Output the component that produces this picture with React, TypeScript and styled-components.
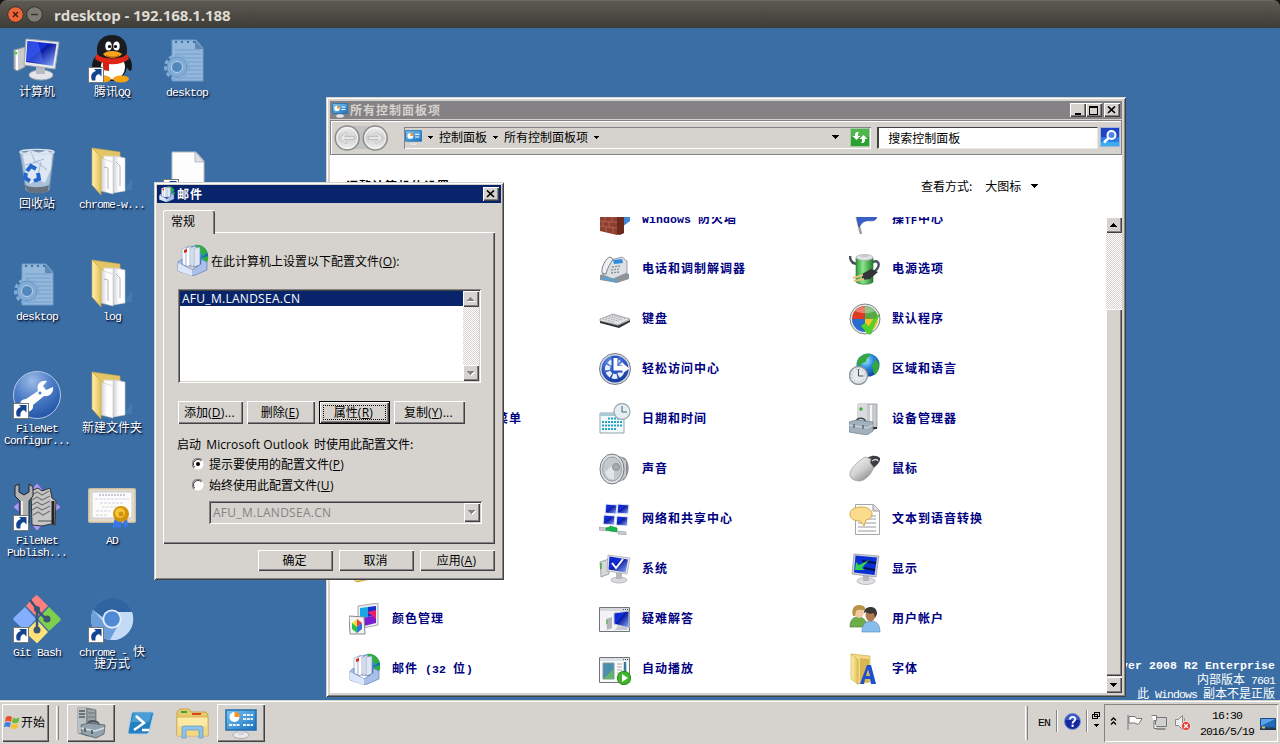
import React from "react";
import styled, { createGlobalStyle, css } from "styled-components";

const face = "#d6d3ce";
const shade = "#848284";
const dark = "#424142";
const navy = "#08246b";
const link = "#000080";

const Global = createGlobalStyle`
  * { box-sizing: border-box; }
  body { margin: 0; overflow: hidden; font-family: "Noto Sans CJK SC", sans-serif; font-size: 12px; line-height: 14px; color: #000; }
  svg { display: block; flex: none; }
`;

/* ---------- text ---------- */
const MonoRun = styled.span<{ $bold?: boolean }>`
  font-family: "Liberation Mono", monospace;
  font-size: 11.5px;
  line-height: 0;
  letter-spacing: ${(p) => (p.$bold ? "0.1px" : "-0.9px")};
`;
const SansRun = styled.span<{ $pad?: number }>`
  font-family: "Open Sans", sans-serif;
  font-size: 12px;
  line-height: 0;
  letter-spacing: ${(p) => (p.$pad ? "0.1px" : "0.28px")};
  margin: 0 ${(p) => p.$pad || 0}px;
`;
const Mixed = ({ text, bold }: { text: string; bold?: boolean }) => (
  <>
    {text.split(/([\x20-\x7e]+)/).map((run, i) =>
      i % 2 ? <MonoRun key={i} $bold={bold}>{run}</MonoRun> : run
    )}
  </>
);

/* ---------- bevels ---------- */
const raised = css`
  background: ${face};
  box-shadow: inset 1px 1px #fff, inset -1px -1px ${dark}, inset -2px -2px ${shade};
`;
const sunken = css`
  box-shadow: inset 1px 1px ${shade}, inset -1px -1px #fff, inset 2px 2px ${dark}, inset -2px -2px ${face};
`;

/* ---------- frame ---------- */
const Screen = styled.div`
  width: 1280px;
  height: 744px;
  display: flex;
  flex-direction: column;
  overflow: hidden;
  background: #3a6ea5;
`;
const HostBar = styled.header`
  flex: none;
  height: 28px;
  display: flex;
  align-items: center;
  padding: 0 0 0 7px;
  gap: 2px;
  background: linear-gradient(#5c5a51, #4d4b44 50%, #3d3c38);
  border-top: 1px solid #6d6b62;
  border-radius: 7px 7px 0 0;
`;
const HostBarBack = styled.div`
  flex: none;
  background: #15150f;
`;
const HostTitle = styled.h1`
  margin: 0 0 0 9px;
  font: bold 15px/24px "Open Sans", sans-serif;
  letter-spacing: -0.08px;
  color: #dfdbd2;
  white-space: pre;
`;
const Desktop = styled.main`
  position: relative;
  flex: 1;
  min-height: 0;
  overflow: hidden;
  padding-top: 7px;
`;
const IconGrid = styled.div`
  display: grid;
  grid-auto-flow: column;
  grid-template-rows: repeat(6, 112px);
  grid-auto-columns: 75px;
`;
const Shortcut = styled.div`
  display: flex;
  flex-direction: column;
  align-items: center;
  width: 75px;
  height: 112px;
  padding-right: 1px;
`;
const ShortcutLabel = styled.div`
  margin-top: 2px;
  width: 74px;
  text-align: center;
  white-space: pre;
  line-height: 12px;
  color: #fff;
  text-shadow: 1px 1px 1px rgba(0, 10, 40, 0.85), 1px 2px 2px rgba(0, 10, 40, 0.5);
`;
const Watermark = styled.div`
  position: absolute;
  right: 5px;
  bottom: 1px;
  display: flex;
  flex-direction: column;
  align-items: flex-end;
  color: #fff;
  white-space: pre;
`;
const MarkLine = styled.div<{ $bold?: boolean; $h: number }>`
  height: ${(p) => p.$h}px;
  line-height: 13px;
  font-weight: ${(p) => (p.$bold ? 700 : 400)};
`;

/* ---------- windows ---------- */
const Win = styled.section<{ $x: number; $y: number; $w: number; $h: number; $b: number }>`
  position: absolute;
  left: ${(p) => p.$x}px;
  top: ${(p) => p.$y}px;
  width: ${(p) => p.$w}px;
  height: ${(p) => p.$h}px;
  padding: ${(p) => p.$b}px;
  display: flex;
  flex-direction: column;
  background: ${face};
  box-shadow: inset 1px 1px ${face}, inset -1px -1px ${dark}, inset 2px 2px #fff, inset -2px -2px ${shade};
`;
const TitleBar = styled.div<{ $active?: boolean }>`
  flex: none;
  height: 18px;
  display: flex;
  align-items: center;
  padding: 0 2px;
  background: ${(p) => (p.$active ? navy : shade)};
  color: ${(p) => (p.$active ? "#fff" : face)};
  font-weight: 700;
`;
const TitleText = styled.span`
  flex: 1;
  margin-left: 2px;
  letter-spacing: 1px;
`;
const CaptionButton = styled.button<{ $gap?: number }>`
  ${raised}
  border: 0;
  padding: 0;
  width: 16px;
  height: 14px;
  margin-left: ${(p) => p.$gap || 0}px;
  display: grid;
  place-items: center;
`;
const ToolBar = styled.div`
  flex: none;
  height: 35px;
  margin-top: 1px;
  display: flex;
  align-items: flex-start;
  padding: 7px 1px 0 3px;
  border: 1px solid ${shade};
  box-shadow: inset 1px 1px #fff;
`;
const Address = styled.div`
  margin: -1px 0 0 14px;
  width: 468px;
  height: 22px;
  display: flex;
  align-items: center;
  padding: 1px 1px 2px 1px;
  box-shadow: inset 1px 1px ${shade}, inset -1px -1px #fff;
`;
const Gap = styled.span<{ $w: number }>`
  width: ${(p) => p.$w}px;
`;
const Crumb = styled.span`
  margin: -2px 6px 0 5px;
  line-height: 14px;
`;
const Spacer = styled.span`
  flex: 1;
`;
const Search = styled.div`
  margin: -1px 2px 0 6px;
  width: 221px;
  height: 22px;
  padding: 3px 0 0 10px;
  background: #fff;
  border: 1px solid #e7e7e7;
  border-top-color: ${dark};
  border-left-color: ${dark};
  box-shadow: inset 1px 0 ${dark};
`;
const PanelBody = styled.div`
  flex: 1;
  min-height: 0;
  display: flex;
  flex-direction: column;
  background: #fff;
`;
const PanelHead = styled.div`
  flex: none;
  height: 62px;
  display: flex;
  padding: 24px 0 0 16px;
`;
const Heading = styled.h2`
  margin: 0;
  width: 575px;
  font-size: 12px;
  line-height: 14px;
  letter-spacing: 1px;
`;
const ViewBy = styled.div`
  display: flex;
  align-items: center;
  height: 14px;
`;
const ViewMode = styled.span`
  margin: 0 10px 0 13px;
`;
const ListArea = styled.div`
  flex: 1;
  min-height: 0;
  display: flex;
`;
const Items = styled.div`
  flex: 1;
  min-width: 0;
  overflow: hidden;
  padding-left: 19px;
  display: grid;
  grid-template-columns: repeat(3, 250px);
  grid-auto-rows: 50px;
`;
const Item = styled.a<{ $col: number; $row: number }>`
  grid-column: ${(p) => p.$col};
  grid-row: ${(p) => p.$row};
  display: flex;
  align-items: center;
  gap: 11px;
  height: 50px;
  margin-top: -23px;
  white-space: pre;
  color: ${link};
  font-weight: 700;
  letter-spacing: 1px;
`;
const ItemName = styled.span`
  padding-bottom: 2px;
`;
const ScrollBar = styled.div`
  flex: none;
  width: 16px;
  display: flex;
  flex-direction: column;
  background: repeating-conic-gradient(#fff 0 25%, ${face} 0 50%) 0 0 / 2px 2px;
`;
const ScrollButton = styled.button`
  ${raised}
  flex: none;
  border: 0;
  padding: 0;
  width: 16px;
  height: 16px;
  display: grid;
  place-items: center;
`;
const Thumb = styled.div`
  ${raised}
  margin-top: 76px;
  height: 367px;
`;

/* ---------- dialog ---------- */
const DialogBody = styled.div`
  flex: 1;
  display: flex;
  flex-direction: column;
  padding: 7px 6px 6px 6px;
`;
const Tab = styled.div`
  position: relative;
  z-index: 1;
  width: 52px;
  height: 24px;
  margin-bottom: -2px;
  padding: 3px 0 0 7px;
  background: ${face};
  border-top: 1px solid #fff;
  border-left: 1px solid #fff;
  border-radius: 3px 2px 0 0;
  box-shadow: inset -1px 0 ${dark}, inset -2px 0 ${shade};
`;
const Page = styled.div`
  height: 312px;
  display: flex;
  flex-direction: column;
  padding: 12px 13px 0 14px;
  box-shadow: inset 1px 1px #fff, inset -1px -1px ${dark}, inset -2px -2px ${shade};
`;
const Intro = styled.div`
  display: flex;
  align-items: center;
  gap: 2px;
  height: 32px;
`;
const IntroText = styled.span`
  padding-top: 2px;
`;
const ListBox = styled.div`
  ${sunken}
  margin: 13px 0 0 1px;
  width: 303px;
  height: 94px;
  padding: 2px;
  display: flex;
  background: #fff;
`;
const ListRows = styled.div`
  flex: 1;
`;
const SelectedRow = styled.div`
  height: 15px;
  padding-left: 2px;
  line-height: 14px;
  background: ${navy};
  color: #fff;
`;
const ButtonRow = styled.div<{ $top: number; $gap: number; $end?: boolean }>`
  display: flex;
  justify-content: ${(p) => (p.$end ? "flex-end" : "flex-start")};
  gap: ${(p) => p.$gap}px;
  margin: ${(p) => p.$top}px 0 0 ${(p) => (p.$end ? 0 : 1)}px;
`;
const PushButton = styled.button<{ $w: number; $h: number; $focus?: boolean }>`
  ${raised}
  position: relative;
  flex: none;
  border: 0;
  padding: 0 2px 2px 0;
  width: ${(p) => p.$w}px;
  height: ${(p) => p.$h}px;
  font: inherit;
  color: #000;
  white-space: nowrap;
  ${(p) =>
    p.$focus &&
    css`
      border: 1px solid #000;
      &::after {
        content: "";
        position: absolute;
        inset: 3px;
        border: 1px dotted #000;
      }
    `}
`;
const Caption = styled.div`
  margin-top: 13px;
  height: 14px;
  line-height: 14px;
  white-space: pre;
`;
const RadioRow = styled.label<{ $top: number }>`
  display: flex;
  align-items: center;
  gap: 5px;
  height: 14px;
  margin: ${(p) => p.$top}px 0 0 15px;
`;
const Combo = styled.div`
  ${sunken}
  margin: 9px 0 0 32px;
  width: 273px;
  height: 23px;
  padding: 2px 2px 2px 4px;
  display: flex;
  align-items: center;
  justify-content: space-between;
  color: ${shade};
`;
const ComboButton = styled.span`
  ${raised}
  width: 16px;
  height: 19px;
  display: grid;
  place-items: center;
`;

/* ---------- taskbar ---------- */
const TaskBar = styled.footer`
  flex: none;
  height: 44px;
  display: flex;
  align-items: flex-start;
  padding: 4px 2px 0 2px;
  background: ${face};
  box-shadow: inset 0 1px ${face}, inset 0 2px #fff;
`;
const StartButton = styled.button`
  ${raised}
  border: 0;
  width: 47px;
  height: 38px;
  padding: 0 0 2px 2px;
  display: flex;
  align-items: center;
  font: inherit;
  color: #000;
`;
const Rule = styled.span<{ $l: number; $r: number; $thick?: boolean }>`
  width: ${(p) => (p.$thick ? 3 : 2)}px;
  height: ${(p) => (p.$thick ? 34 : 22)}px;
  margin: ${(p) => (p.$thick ? 2 : 6)}px ${(p) => p.$r}px 0 ${(p) => p.$l}px;
  border-left: 1px solid ${(p) => (p.$thick ? "#fff" : shade)};
  border-right: 1px solid ${(p) => (p.$thick ? shade : "#fff")};
`;
const TaskButton = styled.button<{ $open?: boolean; $w: number }>`
  border: 0;
  padding: 0 0 1px;
  width: ${(p) => p.$w}px;
  height: 38px;
  display: grid;
  place-items: center;
  background: ${face};
  ${(p) => p.$open && raised}
`;
const Lang = styled.span`
  width: 13px;
  margin: 10px -1px 0 1px;
`;
const TrayGlyph = styled.span<{ $w: number; $top: number; $l?: number }>`
  width: ${(p) => p.$w}px;
  margin: ${(p) => p.$top}px 0 0 ${(p) => p.$l || 0}px;
`;
const Tray = styled.div`
  width: 174px;
  height: 38px;
  display: flex;
  align-items: flex-start;
  margin-left: 3px;
  box-shadow: inset 1px 1px ${shade}, inset -1px -1px #fff;
`;
const Clock = styled.div`
  width: 54px;
  margin: 2px 0 0 9px;
  text-align: center;
  line-height: 16px;
  white-space: nowrap;
`;

/* ---------- small glyphs ---------- */
const Arrow = ({ up, w = 7, color = "#000", shadow }: { up?: boolean; w?: number; color?: string; shadow?: boolean }) => {
  const h = (w + 1) / 2;
  const d = up ? `M0 ${h}H${w}L${w / 2} 0Z` : `M0 0H${w}L${w / 2} ${h}Z`;
  return (
    <svg width={w + 1} height={h + 1} shapeRendering="crispEdges">
      {shadow && <path d={d} fill="#fff" transform="translate(1 1)" />}
      <path d={d} fill={color} />
    </svg>
  );
};
const CloseGlyph = () => (
  <svg width="10" height="8" viewBox="0 0 10 8">
    <path d="M1 .5l7 6.5M8 .5L1 7" stroke="#000" strokeWidth="1.7" />
  </svg>
);
const MinGlyph = () => (
  <svg width="10" height="9"><path d="M2 7h6v2H2z" fill="#000" /></svg>
);
const MaxGlyph = () => (
  <svg width="10" height="9" shapeRendering="crispEdges">
    <path d="M0 0h9v9H0zM1 2v6h7V2z" fill="#000" fillRule="evenodd" />
  </svg>
);
const Radio = ({ on }: { on?: boolean }) => (
  <svg width="12" height="12" viewBox="0 0 12 12">
    <circle cx="6" cy="6" r="5.5" fill="#fff" />
    <path d="M2 10A5.5 5.5 0 0 1 10 2" fill="none" stroke={shade} strokeWidth="1.1" />
    <path d="M2.8 9.2A4.5 4.5 0 0 1 9.2 2.8" fill="none" stroke={dark} strokeWidth="1" />
    {on && <circle cx="6" cy="6" r="2" />}
  </svg>
);

/* ---------- shared gradients ---------- */
const Defs = () => (
  <svg width="0" height="0" style={{ position: "absolute" }}>
    <defs>
      <linearGradient id="scr" x1="0" y1="0" x2="1" y2="1">
        <stop offset="0" stopColor="#0a1fc4" /><stop offset=".4" stopColor="#1230d8" />
        <stop offset=".45" stopColor="#0a18a0" /><stop offset="1" stopColor="#8fb4ff" />
      </linearGradient>
      <linearGradient id="grey" x1="0" y1="0" x2="1" y2="1">
        <stop offset="0" stopColor="#f4f4f6" /><stop offset="1" stopColor="#8d9095" />
      </linearGradient>
      <linearGradient id="fold" x1="0" y1="0" x2="1" y2="0">
        <stop offset="0" stopColor="#fff3ae" /><stop offset="1" stopColor="#e2bf58" />
      </linearGradient>
      <linearGradient id="paper" x1="0" y1="0" x2="1" y2="0">
        <stop offset="0" stopColor="#cfcfd4" /><stop offset=".5" stopColor="#fff" />
      </linearGradient>
      <radialGradient id="globe" cx=".4" cy=".3" r=".8">
        <stop offset="0" stopColor="#9fe8ff" /><stop offset=".45" stopColor="#2585dc" /><stop offset="1" stopColor="#0b3590" />
      </radialGradient>
      <radialGradient id="blueBall" cx=".4" cy=".25" r=".8">
        <stop offset="0" stopColor="#6d96ea" /><stop offset=".6" stopColor="#2c55c4" /><stop offset="1" stopColor="#163894" />
      </radialGradient>
      <radialGradient id="wrenchBall" cx=".4" cy=".2" r=".85">
        <stop offset="0" stopColor="#9dbbe6" /><stop offset=".5" stopColor="#4a7cc6" /><stop offset="1" stopColor="#1d50a4" />
      </radialGradient>
      <linearGradient id="nav" x1="0" y1="0" x2="0" y2="1">
        <stop offset="0" stopColor="#f0f0f0" /><stop offset=".5" stopColor="#cfcfcf" /><stop offset="1" stopColor="#f2f2f2" />
      </linearGradient>
      <linearGradient id="panelBlue" x1="0" y1="0" x2="1" y2="1">
        <stop offset="0" stopColor="#7cc6f5" /><stop offset="1" stopColor="#1c72bf" />
      </linearGradient>
      <linearGradient id="battery" x1="0" y1="0" x2="1" y2="0">
        <stop offset="0" stopColor="#2f9638" /><stop offset=".4" stopColor="#8ee58c" /><stop offset="1" stopColor="#1f7f2a" />
      </linearGradient>
      <linearGradient id="mouse" x1="0" y1="0" x2=".7" y2="1">
        <stop offset="0" stopColor="#fbfbfb" /><stop offset=".6" stopColor="#cfcfcf" /><stop offset="1" stopColor="#8c8c8c" />
      </linearGradient>
    </defs>
  </svg>
);

const Overlay = () => (
  <g>
    <rect x=".5" y="32.5" width="15" height="15" fill="#fff" stroke="#777" />
    <path d="M4 45.500c-2-5 0-8.500 4-9.500L6 34h7.500v7.500L11 39c-3 .8-4 2.800-3.500 6.500z" fill="#14438f" />
  </g>
);
const I48 = ({ children }: { children: React.ReactNode }) => (
  <svg width="48" height="48" viewBox="0 0 48 48">{children}</svg>
);
const I32 = ({ children, s = 32 }: { children: React.ReactNode; s?: number }) => (
  <svg width={s} height={s} viewBox="0 0 32 32">{children}</svg>
);

/* ---------- desktop icons ---------- */
const Computer = () => (
  <I48>
    <path d="M1 15l11-3v20L4 36l-3-2z" fill="#c9cbd0" stroke="#8d9096" />
    <path d="M4 15v20" stroke="#fff" strokeWidth="2" /><circle cx="3" cy="18" r="1.500" fill="#3fdc2c" />
    <ellipse cx="28" cy="40" rx="12" ry="5" fill="#e4e5ea" stroke="#a9abb2" />
    <path d="M23 30h9v9h-9z" fill="#b9bbc2" />
    <path d="M13 4l33 3-4 27-31-4z" fill="#e8e9ee" stroke="#a5a8b0" />
    <path d="M14.500 6l29 3-3.500 22-27-4z" fill="url(#scr)" />
    <path d="M15 6l10 1 6 21.500-18-2.500z" fill="#4a6cf5" opacity=".55" />
  </I48>
);
const Penguin = () => (
  <I48>
    <path d="M9 20c-5 4-6 12-4 16 2 0 4-3 5-6zM39 20c5 4 6 12 4 16-2 0-4-3-5-6z" fill="#15171a" />
    <ellipse cx="24" cy="30" rx="15" ry="16" fill="#15171a" />
    <ellipse cx="25" cy="32" rx="12" ry="12.500" fill="#fff" />
    <ellipse cx="15" cy="44" rx="8" ry="3.500" fill="#f6a211" /><ellipse cx="33" cy="44" rx="8" ry="3.500" fill="#f6a211" />
    <path d="M9 17C8 6 15 0 24 0s16 6 15 17c0 5-7 9-15 9S9 22 9 17z" fill="#1a1c20" />
    <path d="M8 19c8 6 24 6 32 0l1 5c-9 7-24 7-34 0z" fill="#e02618" />
    <path d="M15 26l6 1v9l-6-1z" fill="#d81e14" />
    <ellipse cx="20.500" cy="11" rx="3.200" ry="4.500" fill="#fff" /><ellipse cx="28.500" cy="11" rx="3.200" ry="4.500" fill="#fff" />
    <circle cx="21.500" cy="11.500" r="1.600" /><circle cx="27.500" cy="11.500" r="1.600" />
    <path d="M15 19c4-4 14-4 19 0-4 5-15 5-19 0z" fill="#f9a51a" />
    <path d="M18 20.500c4 2 9 2 13 0" stroke="#c4600b" fill="none" />
    <Overlay />
  </I48>
);
const ConfigFile = () => (
  <I48>
    <path d="M9 5h24l7 8v33H9z" fill="#93b8dc" stroke="#6f9bc6" />
    <path d="M32 5v9h8z" fill="#5d87b4" />
    <path d="M12 15h26M12 19h26M12 23h26M12 27h26M12 31h26M12 35h26M12 39h26M12 43h26" stroke="#749fca" />
    <path d="M12 7h2M18 7h2M24 7h2M30 7h2" stroke="#3d6f9f" strokeWidth="2" />
    <circle cx="14" cy="32" r="10" fill="#82acd6" stroke="#6391c0" />
    <circle cx="14" cy="32" r="11.500" fill="none" stroke="#82acd6" strokeWidth="3" strokeDasharray="4 2.500" />
    <circle cx="14" cy="32" r="5.500" fill="#5288bc" stroke="#b9d2ec" />
  </I48>
);
const RecycleBin = () => (
  <I48>
    <path d="M7 5l34-1-5 39c-1 3-21 4-23 0z" fill="#a9c1da" stroke="#8297ad" />
    <path d="M10 8l7-5 9 3 8-3 5 5-1 14-6 14-8-4-7 5-4-12z" fill="#dde8f4" />
    <path d="M17 3l5 12 9-3M12 18l12-3 10 8M28 15l-4 17" stroke="#9fb7d0" fill="none" />
    <path d="M12 38c6 3 17 3 24 0l-1 6c-5 3-17 3-21 0z" fill="#66727e" />
    <ellipse cx="24" cy="5" rx="17" ry="2.500" fill="none" stroke="#d6e0ea" strokeWidth="1.500" />
    <g fill="none" stroke="#2467cc" strokeWidth="4"><path d="M14 24l4-5 5 3" /><path d="M25 26l1 6-5 2" /><path d="M17 34l-5-3 1-5" /></g>
  </I48>
);
const Folder = ({ lined }: { lined?: boolean }) => (
  <I48>
    <path d="M36 43l8-12v12z" fill="#4f83bd" opacity=".5" />
    <path d="M4 1l28 4v34l-18 4z" fill="#e4c566" stroke="#c9a94c" strokeWidth=".6" />
    <path d="M16 9l17 1v33l-17-1z" fill="#fff" stroke="#ddd" />
    <path d="M25 9l12 2v33l-12 2z" fill="url(#paper)" stroke="#cfcfcf" strokeWidth=".6" />
    <path d="M13 11l12 4v32l-12-3z" fill="url(#paper)" stroke="#c5c5c5" strokeWidth=".6" />
    {lined && <path d="M16 20l4 1v21M28 15l4 4v20" stroke="#aeb4c4" fill="none" />}
    <path d="M4 1l9 9v38L4 38z" fill="url(#fold)" stroke="#cba947" strokeWidth=".6" />
  </I48>
);
const BlankFile = () => (
  <I48>
    <path d="M9 5h24l8 9v33H9z" fill="#fdfdfd" stroke="#b9bcc2" />
    <path d="M32 5v10h9z" fill="#dfe2e8" stroke="#9ea3ac" strokeWidth=".7" /><Overlay />
  </I48>
);
const Wrench = () => (
  <I48>
    <circle cx="24" cy="24" r="23.500" fill="url(#wrenchBall)" stroke="#b5c6e6" />
    <path d="M8 36c-2-4 0-8 5-8l12-8c-2-6 2-11 9-10l-4 5 3 4 7-3c1 6-4 10-9 9L20 34c1 5-4 8-8 6l4-4-2-3z" fill="#fff" />
    <circle cx="27" cy="22" r="1.500" fill="#3f7fd0" /><Overlay />
  </I48>
);
const Publisher = () => (
  <I48>
    <path d="M24 0l6 7H18zM24 48l6-7H18zM0 24l6-5v10zM48 24l-6-5v10z" fill="#a79df2" stroke="#5e52b8" strokeWidth=".7" />
    <path d="M18 8l7-3 4 3 8-3 2 10 4 3-1 24-4-1-9 2-10-1z" fill="#c6c6c6" stroke="#333" />
    <path d="M19 12l5-3 5 3 7-4M19 17l5-3 5 3 8-4M19 22l5-3 5 3 8-4M19 27l5-3 5 3 8-4M20 32l5-3 5 3 7-4M25 38h14" stroke="#777" strokeWidth="1.300" fill="none" />
    <path d="M40 18v23" stroke="#222" strokeWidth="3" />
    <path d="M2 3l4-2v8l5 3 5-3V1l4 3v9l-4 5v22h-9V18l-5-5z" fill="#b4b4b4" stroke="#222" />
    <path d="M9 18v22" stroke="#eee" strokeWidth="2" /><Overlay />
  </I48>
);
const Certificate = () => (
  <I48>
    <rect x="0" y="5" width="48" height="35" rx="2" fill="#c9bda4" />
    <rect x="1.500" y="6.500" width="45" height="32" fill="#e6dcc6" /><rect x="4" y="9" width="40" height="26" fill="#fdfcfb" stroke="#c6cbe0" />
    <path d="M11 12h26" stroke="#9193b4" strokeDasharray="2 1" /><path d="M7 16h34M12 20h24M14 24h18M8 28h14M8 32h12" stroke="#cfd2e4" strokeDasharray="3 1" />
    <path d="M27 35l-3 11 5-2 4 1 1-8zM35 37l1 8 4-2-1-8z" fill="#3a77e6" />
    <circle cx="33" cy="31" r="8" fill="#d39208" /><circle cx="32" cy="30" r="5" fill="#f5c73c" /><circle cx="33" cy="31" r="2.500" fill="#d39208" />
  </I48>
);
const GitLogo = () => (
  <I48>
    <path d="M24 0L35 11 24 22 13 11Q21 1 24 0z" fill="#ff7f7f" />
    <path d="M36 12l11 11q1.500 1.500 0 3L36 36 25 24z" fill="#7fcf4f" />
    <path d="M12 12l11 12-11 12L1 25.500q-1.500-1.500 0-3z" fill="#86aeff" />
    <path d="M24 25l11 12-10 10.500q-1 1-2 0L12 37z" fill="#ffe17a" />
    <path d="M17 5l7 9v24M24 15l10 10" stroke="#3a5573" strokeWidth="2.500" fill="none" />
    <circle cx="24" cy="14" r="3" fill="#3a5573" /><circle cx="34" cy="24" r="3.500" fill="#3a5573" /><circle cx="24" cy="35" r="3.500" fill="#3a5573" />
    <Overlay />
  </I48>
);
const Chromium = () => (
  <I48>
    <circle cx="24" cy="24" r="21" fill="#a8c9ef" />
    <path d="M5 15A21 21 0 0 1 44 17H24a8 8 0 0 0-8 6z" fill="#2f64a3" />
    <path d="M5 15a21 21 0 0 0 17 30l8-14a9 9 0 0 1-14-3z" fill="#6d9fdb" />
    <path d="M44 17a21 21 0 0 1-22 28l9-16c3-4 1-9-1-12z" fill="#c3dbf6" />
    <circle cx="24" cy="24" r="9.500" fill="#e7f1fc" /><circle cx="24" cy="24" r="7.800" fill="#4f8ad6" />
    <Overlay />
  </I48>
);

/* ---------- control panel icons ---------- */
const Mail = ({ s = 32 }: { s?: number }) => (
  <I32 s={s}>
    <circle cx="20" cy="12" r="11" fill="url(#globe)" /><path d="M18 1c6-1 11 3 13 9-3-2-4 3-5 2s-1-4-4-4zM25 14l6-2c1 5-2 10-6 11z" fill="#2fae3c" />
    <path d="M5 5l7-3v19l-7 1z" fill="#f7f8fb" stroke="#8fa0c4" strokeWidth=".6" />
    <path d="M9 4l6-2v19l-6 2zM13 4l6-2v19l-6 2z" fill="#fff" stroke="#7f92bd" strokeWidth=".7" />
    <path d="M17 4l6-1v18l-6 2z" fill="#dfe7f5" stroke="#7f92bd" strokeWidth=".7" />
    <path d="M7 6l3-1v3l-3 1z" fill="#d8291c" />
    <path d="M1 18l4-3v5l10 6 9-6v-5l6 3v8l-14 6L1 27z" fill="#a9bfe8" stroke="#5f7fc0" strokeWidth=".7" />
    <path d="M1 19l14 7v6L1 27z" fill="#dbe6f9" />
  </I32>
);
const Firewall = () => (
  <I32>
    <path d="M20 4h11v14l-8 6z" fill="#3f87d8" />
    <path d="M1 8l20-3 4 2v23l-7 2L1 28z" fill="#8f3f2f" /><path d="M18 8l7-1v23l-4 2-3-1z" fill="#6c2a1e" />
    <path d="M1 13l17 1M1 18l17 1.500M1 23l17 2M6 13v5M13 14v5M4 18v5M10 18.500v6M7 23.500v5M14 24v6" stroke="#b9705c" strokeWidth=".7" />
  </I32>
);
const Phone = () => (
  <I32>
    <path d="M1 22l18-6 11 5v5l-12 4L1 27z" fill="#8d949b" /><path d="M8 8l15-4 5 4v12l-14 6-10-4z" fill="#dce0e4" stroke="#858c94" strokeWidth=".8" />
    <path d="M14 7l9-1 1 4-9 1z" fill="#2d8be0" /><path d="M3 20C2 14 7 5 11 4l3 2c-2 4-6 9-7 15z" fill="#eef0f3" stroke="#7b828b" />
    <path d="M13 14l8-1M12 17l9-1M12 20l8-1" stroke="#8a929c" strokeWidth="1.300" strokeDasharray="2 1" /><path d="M4 25l13 3" stroke="#4aa8e8" strokeWidth="3" strokeDasharray="2 1" />
  </I32>
);
const Keyboard = () => (
  <I32>
    <path d="M1 16l13-5 17 5-12 6L1 18z" fill="#e2e3e5" stroke="#888" strokeWidth=".7" /><path d="M1 18l18 4.500L31 17v2l-11 6-19-5z" fill="#33353a" />
    <path d="M4 16l12 3.500M7 14.700l13 3.500M10 13.500l13 3.500M13 12.200l13 3.500" stroke="#a0a2a6" strokeWidth="1" strokeDasharray="1.500 1" />
  </I32>
);
const Access = () => (
  <I32>
    <circle cx="16" cy="16" r="15.500" fill="#d5dae4" stroke="#777e8c" /><circle cx="16" cy="16" r="13.500" fill="url(#blueBall)" />
    <circle cx="16" cy="16" r="7.500" fill="none" stroke="#eaf0fb" strokeWidth="5" strokeDasharray="4.800 1.500" strokeDashoffset="3" />
    <circle cx="16" cy="16" r="2.500" fill="#2c55c4" />
    <path d="M16 3v13h11" stroke="#2b54c2" strokeWidth="7" fill="none" /><path d="M14.500 5h4v8h5v-3l7 5.500-7 5v-3h-9z" fill="#fff" />
  </I32>
);
const Calendar = () => (
  <I32>
    <path d="M1 10h24v20H1z" fill="#f2fafc" stroke="#93a3aa" /><path d="M1.500 10h23v3h-23z" fill="#a6cbd6" />
    <path d="M9 15.500h14M3 19h20M3 22.500h20M3 26h14" stroke="#22a4c4" strokeWidth="2" strokeDasharray="2 1" />
    <circle cx="23" cy="8.500" r="8" fill="#e4eef3" stroke="#9eaab2" strokeWidth="1.300" /><path d="M23 3v6h5" stroke="#48657a" fill="none" />
  </I32>
);
const Speaker = () => (
  <I32>
    <path d="M14 1l12 4c5 5 5 16-1 22l-11 4z" fill="#8b8f94" /><path d="M20 3l7 5v15l-6 6" fill="#c4c7cb" />
    <ellipse cx="13" cy="16" rx="12" ry="15" fill="#dde0e3" stroke="#777b80" /><ellipse cx="13" cy="16" rx="9.500" ry="12" fill="#c3c9cf" stroke="#9a9ea3" />
    <path d="M15 11l-9 8c1 5 5 8 9 7z" fill="#eef1f4" opacity=".7" /><circle cx="17" cy="14" r="3.500" fill="#a6abb1" stroke="#8d9299" />
  </I32>
);
const Network = () => (
  <I32>
    {[[7, 1], [19, 1], [5, 12], [18, 13]].map(([x, y]) => (
      <path key={x} d={`M${x} ${y}l11 1-1 9-11-1z`} fill="url(#scr)" stroke="#dfe5f5" />
    ))}
    <path d="M0 24l8 1v3l-8-1zM19 28l8 1v3l-8-1z" fill="#c8ccd2" stroke="#888" strokeWidth=".5" /><path d="M7 25l4-1v-1l7 2v4l-7-1-4-1z" fill="#17b54a" stroke="#0b8732" strokeWidth=".6" />
  </I32>
);
const SystemIcon = () => (
  <I32>
    <path d="M1 9l9-3v15l-8 3z" fill="#d5d7db" stroke="#84878c" strokeWidth=".7" /><path d="M2 10v6" stroke="#36b52c" strokeWidth="1.500" />
    <ellipse cx="20" cy="27" rx="8" ry="3" fill="#d9dade" stroke="#999" strokeWidth=".6" /><path d="M17 20h6v6h-6z" fill="#b6b8bc" />
    <path d="M9 2l22 3-3 16-20-3z" fill="#e4e6ec" stroke="#999" strokeWidth=".6" /><path d="M10.500 3.500l18.500 3-2.500 13-17-3z" fill="url(#scr)" />
    <path d="M13 10l4 5 7-9" stroke="#fff" strokeWidth="2" fill="none" />
  </I32>
);
const Trouble = () => (
  <I32>
    <path d="M.5 4.500h30v24H.5z" fill="#f3f3f5" stroke="#6f7479" /><path d="M1 5h29v3H1z" fill="#d5d9dd" /><path d="M24 6.500h6" stroke="#555" strokeDasharray="1 1" />
    <path d="M7 16l6-2v11l-5 2z" fill="#b2b6bb" /><path d="M8 17v4" stroke="#36b52c" /><path d="M15 10l15-2v17l-15-4z" fill="url(#scr)" stroke="#c8ccd6" /><path d="M19 23l8 1 2 3H16z" fill="#c8cacf" />
  </I32>
);
const AutoPlay = () => (
  <I32>
    <path d="M.5 4.500h30v25H.5z" fill="#fafafa" stroke="#6f7479" /><path d="M1 5h29v3H1z" fill="#dbe2e6" /><path d="M24 6.500h6" stroke="#555" strokeDasharray="1 1" />
    <path d="M4 10h11v16H4z" fill="#4b8fae" stroke="#87999f" /><path d="M4.500 26l10-10v10z" fill="#63b36a" />
    <path d="M18 11h5M18 14h5M18 17h5M18 20h4" stroke="#aaa" /><path d="M26 9v10" stroke="#2d7d9d" strokeWidth="2.500" />
    <circle cx="25" cy="25" r="6.700" fill="#3eb528" stroke="#2a8c1a" /><path d="M23 21l6 4-6 4z" fill="#fff" />
  </I32>
);
const Flag = () => (
  <I32>
    <path d="M5 3l7 28" stroke="#999da5" strokeWidth="2.500" /><path d="M6 4c8-2 12 4 22 0-1 5 1 9-1 12-5 5-10-3-17 8z" fill="#355fcb" stroke="#1e3f9e" strokeWidth=".6" />
    <path d="M12 8c4 0 8 4 13 2" stroke="#a6c0f5" strokeWidth="2" fill="none" />
  </I32>
);
const Power = () => (
  <I32>
    <path d="M1 3c0 5 3 8 8 8M22 10c8-5 9 2 6 6s-5 3-7 5" stroke="#4a4e5c" strokeWidth="2.400" fill="none" />
    <path d="M7 5c2-3 15-3 17 0v24c-2 3-15 3-17 0z" fill="url(#battery)" stroke="#23762c" strokeWidth=".6" /><ellipse cx="15.500" cy="4.500" rx="8.500" ry="3" fill="#dfe2e4" stroke="#999" strokeWidth=".6" /><path d="M12 1h7v3h-7z" fill="#c6cace" />
    <path d="M13 21l9-5 7 3-8 7-8 1z" fill="#33353a" /><path d="M4 25l10-3M5 28l10-2" stroke="#e2c27a" strokeWidth="2.200" />
  </I32>
);
const Defaults = () => (
  <I32>
    <circle cx="16" cy="16" r="15" fill="#e6e9ea" stroke="#7d8488" /><path d="M16 16V3A13 13 0 0 0 3 16z" fill="#de3b22" /><path d="M16 16V3a13 13 0 0 1 13 13z" fill="#58a848" />
    <path d="M16 16H3a13 13 0 0 0 13 13z" fill="#2b6bce" /><path d="M16 16h13a13 13 0 0 1-13 13z" fill="#f5c426" />
    <path d="M6 8C12 2 20 2 26 8c-7 3-13 3-20 0z" fill="#fff" opacity=".35" /><path d="M12 23l4-3 4 4c3-6 6-10 11-13-4 6-7 13-9 20h-3z" fill="#4ed42b" stroke="#4bb52e" strokeWidth=".6" />
  </I32>
);
const Region = () => (
  <I32>
    <circle cx="19" cy="12" r="11.500" fill="url(#globe)" />
    <path d="M9 6c4-5 9-6 13-5-2 3-2 3-4 4l-1 4-4 1-2 5-3-4zM26 5l4 6c0 5-1 8-4 11-3-4-1-6-3-8 0-4 4-4 3-9z" fill="#35a83b" />
    <circle cx="9.500" cy="22.500" r="9" fill="#e6eaee" stroke="#8d959d" strokeWidth="1.400" /><path d="M9.500 16v7h5" stroke="#44525f" fill="none" /><circle cx="9.500" cy="22.500" r="6.500" fill="none" stroke="#7b8791" strokeDasharray=".8 2.600" />
  </I32>
);
const Devices = () => (
  <I32>
    <path d="M9 1h19v24l-4 2H9z" fill="#c7c9cc" stroke="#8b8e92" strokeWidth=".7" /><path d="M9 1h9v24H9z" fill="#d9dbde" /><circle cx="12" cy="6" r="1.700" fill="#43a932" /><path d="M22 2v24" stroke="#f6f6f7" strokeWidth="2" /><path d="M22 24h6v2h-6z" fill="#333" />
    <path d="M7 19c1-5 8-5 10 0" stroke="#3f464e" strokeWidth="1.600" fill="none" /><path d="M0 19l7-2 17 2v9l-6 4-18-3z" fill="#a3b1bc" stroke="#6c7a85" strokeWidth=".7" /><path d="M0 22l18 3 6-3" stroke="#d5dee4" fill="none" /><path d="M5 21v4M14 22v4" stroke="#515d67" strokeWidth="1.300" />
  </I32>
);
const Mouse = () => (
  <I32>
    <path d="M15 9c4-7 12-8 16-4 1 4-4 8-10 13z" fill="#3b3d42" /><path d="M1 20C3 13 11 7 16 4l6 2c-3 6 4 6 2 10-3 7-8 11-13 12-5 0-11-2-10-8z" fill="url(#mouse)" stroke="#9a9a9a" strokeWidth=".7" /><path d="M23 8c3-2 5-2 6 0" stroke="#cfd1d4" strokeWidth="1.500" fill="none" />
  </I32>
);
const Speech = () => (
  <I32>
    <path d="M6.500 1.500h18l6 6v24h-24z" fill="#fdfdfd" stroke="#a5a5a5" /><path d="M24 2v6h6" fill="#ddd" stroke="#999" /><path d="M9 13h18M9 16h18M9 20h18M9 24h18M9 28h18" stroke="#9b9b9b" />
    <path d="M12 4c7 0 11 3 11 7 0 3-2 5-6 6l-2 6-4-5C4 18 1 15 1 11c0-4 4-7 11-7z" fill="#fbdc8c" stroke="#c9993c" strokeWidth=".8" />
  </I32>
);
const Display = () => (
  <I32>
    <ellipse cx="17" cy="28" rx="9" ry="3.500" fill="#dfe0e3" stroke="#999" strokeWidth=".6" /><path d="M14 21h6v7h-6z" fill="#b6b8bc" />
    <path d="M5 1l25 2-3 21L3 21z" fill="#cfd2d9" stroke="#8e9198" strokeWidth=".7" /><path d="M6.500 2.500l21.500 2-2.500 17.500L5 19.500z" fill="#0a30d2" /><path d="M13 8l14 2M15 15l11 2" stroke="#04104a" strokeWidth="2.200" /><path d="M6 17l1-8 3 3 10-5-7 8 3 2z" fill="#2fd253" />
  </I32>
);
const Users = () => (
  <I32>
    <path d="M1 24c0-7 3-10 8-10s8 3 9 8l-5 2z" fill="#6eae4a" stroke="#487c2b" strokeWidth=".6" /><ellipse cx="10" cy="8.500" rx="5" ry="6.500" fill="#f0c8a2" /><path d="M4 13C2 6 5 2 10 2s7 3 6 5c-4 0-7-1-9 1l-1 5z" fill="#b89348" />
    <path d="M13 29c0-7 3-11 9-11s9 4 9 11z" fill="#87bdeb" stroke="#5186b7" strokeWidth=".6" /><ellipse cx="21.500" cy="12" rx="5" ry="6.500" fill="#b37c50" /><path d="M15 10c0-4 3-6 7-6s6 3 6 7l-2 4-1-5c-3 1-6 1-8-1z" fill="#3a3633" />
  </I32>
);
const Fonts = () => (
  <I32>
    <path d="M2 1l19 2v26L8 31z" fill="#f2da84" stroke="#c5a548" strokeWidth=".6" /><path d="M11 5l9 1v23l-9 1z" fill="#d9b654" /><path d="M2 1l7 6v24l-7-5z" fill="url(#fold)" stroke="#c5a548" strokeWidth=".6" />
    <path d="M11 31l7-19h4l5 19h-5l-1-5h-5l-1 5zm6-8h4l-2-7z" fill="#1c50d2" />
  </I32>
);
const ColorMgmt = () => (
  <I32>
    <path d="M9 3l20-3v22l-20 4z" fill="#eceef0" stroke="#85898f" strokeWidth=".7" /><path d="M11 5l8-1v10l-8 1z" fill="#18a7e6" /><path d="M19 4l8-1v9l-8 2z" fill="#1430d2" /><path d="M11 15l8-1 8-2v8l-16 4z" fill="#7c1cd0" /><path d="M18 9l9-2v9z" fill="#e6206b" />
    <path d="M0 13l15 1 1 17H1z" fill="#f3f3f3" stroke="#85898f" /><path d="M8 16l5 4v6l-5 4-5-4v-6z" fill="#e9e63a" /><path d="M8 16l5 4-5 4z" fill="#ea3a54" /><path d="M3 20l5 4v6l-5-4z" fill="#2ac24b" /><path d="M13 20v6l-5 4v-6z" fill="#2b74ea" />
  </I32>
);
const FolderOptions = () => (
  <I32><path d="M4 5l12-2 8 4v19l-8 1-8 2-4-3z" fill="#f0d264" stroke="#c5a548" /></I32>
);
const PanelIcon = ({ s = 16 }: { s?: number }) => (
  <I32 s={s}>
    <ellipse cx="16" cy="28" rx="8" ry="3.500" fill="#e9eaec" stroke="#9a9da2" strokeWidth=".8" /><path d="M13 23h6v5h-6z" fill="#d2d4d8" />
    <path d="M1 3h30v20H1z" fill="url(#panelBlue)" stroke="#1f6fae" strokeWidth="1.500" />
    {s > 20 ? (
      <g>
        <circle cx="9.500" cy="10" r="5" fill="#fff" /><path d="M9.500 10V4.500A5.500 5.500 0 0 1 15 10z" fill="#f2972b" />
        <path d="M18 8h10M18 12h10M4 18h11M18 18h10" stroke="#e4f3fd" strokeWidth="1.800" strokeDasharray="3 .8" />
      </g>
    ) : (
      <g><circle cx="10" cy="13" r="5.500" fill="#fff" /><path d="M10 13V7a6 6 0 0 1 5.500 6z" fill="#f2972b" /><path d="M19 10h8M19 15h8" stroke="#fff" strokeWidth="2.200" /></g>
    )}
  </I32>
);

/* ---------- other drawings ---------- */
const NavButtons = () => (
  <svg width="56" height="28" viewBox="0 0 56 28" style={{ marginTop: -4 }}>
    <rect x="10" y="2" width="34" height="23" fill="#c2c2c2" />
    {[13.2, 41.2].map((cx) => (
      <g key={cx}><circle cx={cx} cy="14" r="12" fill="url(#nav)" stroke="#8c8c8c" strokeWidth="1.500" /><circle cx={cx} cy="14" r="10.300" fill="none" stroke="#fafafa" opacity=".8" /></g>
    ))}
    <path d="M5.500 14l6.500-6 1.500 1.500-3 3H20v3h-9.500l3 3L12 20zM49 14l-6.500-6L41 9.500l3 3h-9.500v3H44l-3 3 1.500 1.500z" fill="#e6e6e6" stroke="#b9b9b9" strokeWidth=".8" />
  </svg>
);
const Refresh = () => (
  <svg width="20" height="19" viewBox="0 0 20 19">
    <rect x=".5" y=".5" width="19" height="18" fill="#2ba12f" stroke="#a9c9a8" /><path d="M1 1h18v8H1z" fill="#66c45f" opacity=".6" />
    <path d="M9 4C5 3.500 5 6 5 8H2.500l4 4 4-4H8c0-2 0-3 1-4zM11 15c4 .5 4-2 4-4h2.500l-4-4-4 4H12c0 2 0 3-1 4z" fill="#fff" />
  </svg>
);
const SearchButton = () => (
  <svg width="20" height="21" viewBox="0 0 20 21" style={{ marginTop: -1 }}>
    <rect x=".5" y=".5" width="19" height="19" fill="#2b7be2" stroke="#9fb6d8" /><path d="M1 1h18v9H1z" fill="#1f45c4" /><path d="M1 15h18v4H1z" fill="#45c0f5" opacity=".7" />
    <circle cx="11.500" cy="8" r="4" fill="#4d86ea" stroke="#fff" strokeWidth="2" /><path d="M8.500 11L4 15.500" stroke="#fff" strokeWidth="2.600" />
  </svg>
);
const WinLogo = () => (
  <svg width="17" height="16" viewBox="0 0 17 16">
    <path d="M2 3c2-1.500 4-1.500 6 0L7 8C5 6.500 3 6.500 1 8z" fill="#e8502a" /><path d="M9 3.500c2 1.200 4 1.200 6.500 0L14.500 8c-2 1.500-4.500 1.500-6.500.500z" fill="#6cb83a" />
    <path d="M.8 9c2-1.500 4-1.500 6 0l-1 4.500c-2-1.500-4-1.500-6 0z" fill="#3f7fdc" /><path d="M7.800 9.500c2 1.200 4.300 1.200 6.500 0l-1 4.500c-2 1.500-4.300 1.300-6.500 0z" fill="#f6c22c" />
  </svg>
);
const ServerManager = () => (
  <svg width="32" height="32" viewBox="0 0 32 32">
    <path d="M3 1h9l9 2v25l-8 1-10-3z" fill="#858d92" stroke="#5d6468" strokeWidth=".6" /><path d="M3 1h8v25H3z" fill="#b9c1c4" /><path d="M4 4h6M4 7h6M4 10h6" stroke="#50595e" strokeWidth="1.500" /><path d="M13 4h7M13 8h7M13 12h7" stroke="#b4bbbf" />
    <path d="M13 17c2-4 10-4 11 1" stroke="#49525a" strokeWidth="2" fill="none" /><path d="M6 18l8-2 16 2-1 9-8 4-14-4z" fill="#93a3ad" stroke="#53616b" strokeWidth=".8" /><path d="M6 21l14 3 9-3" stroke="#d6dfe5" strokeWidth="1.500" fill="none" /><path d="M10 21v4M17 23v4" stroke="#444f57" strokeWidth="1.500" />
  </svg>
);
const PowerShell = () => (
  <svg width="28" height="24" viewBox="0 0 28 24">
    <path d="M6.500 1H25q2 0 1.500 2L22 21q-.5 2-2.500 2H2.500Q.5 23 1 21L4.500 3Q5 1 6.500 1z" fill="#2680bd" stroke="#a9d2ee" /><path d="M7 2h18l-3 9H4z" fill="#62b2e4" opacity=".6" />
    <path d="M9 5l8 7-10 7M15 19h7" stroke="#fff" strokeWidth="2.500" fill="none" />
  </svg>
);
const Explorer = () => (
  <svg width="33" height="32" viewBox="0 0 33 32">
    <path d="M1 5l3-3h9l2 3h15l2 3v20H1z" fill="#e9ca68" stroke="#b9953a" strokeWidth=".7" /><path d="M5 4h6v2H5z" fill="#3ca446" /><path d="M16 6h9v2h-9z" fill="#d8432f" />
    <path d="M1 10h31v19H1z" fill="#fbe9a4" stroke="#caa84c" strokeWidth=".7" /><path d="M2 19h29v9H2z" fill="#f3d984" />
    <path d="M6 31V21q0-2 2-2h17q2 0 2 2v10h-4v-8H10v8z" fill="#8fc4ea" stroke="#5c93c2" strokeWidth=".7" />
  </svg>
);
const Help = () => (
  <svg width="17" height="17" viewBox="0 0 17 17">
    <circle cx="8.500" cy="8.500" r="8" fill="#1428a0" stroke="#7f95cf" /><path d="M2 7a6.500 6 0 0 1 13 0z" fill="#5b7fe0" opacity=".6" />
    <path d="M6 6.500C6 3 11.500 3 11.200 6.500 11 8.500 8.600 8.300 8.600 10.500" fill="none" stroke="#fff" strokeWidth="1.900" /><circle cx="8.600" cy="12.800" r="1.200" fill="#fff" />
  </svg>
);
const LangRestore = () => (
  <svg width="9" height="17" viewBox="0 0 9 17" shapeRendering="crispEdges">
    <path d="M2.500 .5h5v4h-5zM.5 2.500h5v4h-5z" fill={face} stroke="#000" /><path d="M2 12h5L4.500 15z" />
  </svg>
);
const Chevrons = () => (
  <svg width="7" height="9" viewBox="0 0 7 9"><path d="M1 3.500L3.500 1 6 3.500M1 7.500L3.500 5 6 7.500" fill="none" stroke="#000" strokeWidth="1.300" /></svg>
);
const TrayFlag = () => (
  <svg width="17" height="17" viewBox="0 0 17 17"><path d="M2 1v15M3 2.500h6l1.500 2H16l-2 3.500-2 2.500-3.500-1.500H3z" fill="#fff" stroke="#777" /></svg>
);
const TrayNet = () => (
  <svg width="17" height="17" viewBox="0 0 17 17"><path d="M5.500 3.500h11v9h-11z" fill="#d0d0d0" stroke="#777" /><path d="M6.500 15h9" stroke="#777" strokeWidth="1.500" /><path d="M1.500 1.500h5v5H4v8h3" fill="#fff" stroke="#777" /></svg>
);
const TraySound = () => (
  <svg width="17" height="17" viewBox="0 0 17 17"><path d="M1.500 5.500h3l4-4v14l-4-4h-3z" fill="#eee" stroke="#888" /><path d="M10.500 4v4" stroke="#999" /><circle cx="12" cy="12" r="4.500" fill="#e23b2e" stroke="#fff" strokeWidth=".7" /><path d="M10 10l4 4M14 10l-4 4" stroke="#fff" strokeWidth="1.300" /></svg>
);
const ShowDesktop = () => (
  <svg width="16" height="15" viewBox="0 0 16 15"><path d="M.5 1.500h15v9H.5z" fill="#2468b8" stroke="#1b4a86" /><path d="M1 2h14L1 9z" fill="#58a4e6" /><path d="M0 11h16v2H0z" fill="#24384f" /><path d="M2 9.500h3v2H2z" fill="#e9b93a" /></svg>
);
const HostButton = ({ close }: { close?: boolean }) => (
  <svg width="17" height="17" viewBox="0 0 17 17">
    <circle cx="8.500" cy="8.500" r="7.800" fill={close ? "#ee6638" : "#7c7a72"} stroke="#32312d" />
    {close ? <path d="M6 6l5 5M11 6l-5 5" stroke="#3a1d12" strokeWidth="1.400" /> : <path d="M5 8.500h7" stroke="#33322e" strokeWidth="1.400" />}
  </svg>
);

/* ---------- data ---------- */
const shortcuts: [React.ReactNode, string][] = [
  [<Computer />, "计算机"], [<RecycleBin />, "回收站"], [<ConfigFile />, "desktop"], [<Wrench />, "FileNet\nConfigur..."], [<Publisher />, "FileNet\nPublish..."], [<GitLogo />, "Git Bash"],
  [<Penguin />, "腾讯QQ"], [<Folder lined />, "chrome-w..."], [<Folder lined />, "log"], [<Folder />, "新建文件夹"], [<Certificate />, "AD"], [<Chromium />, "chrome - 快\n捷方式"],
  [<ConfigFile />, "desktop"], [<BlankFile />, ""],
];
const panelItems: [number, number, React.ReactNode, string][] = [
  [1, 5, <PanelIcon s={32} />, "任务栏和「开始」菜单"], [1, 8, <FolderOptions />, "文件夹选项"], [1, 9, <ColorMgmt />, "颜色管理"], [1, 10, <Mail />, "邮件 (32 位)"],
  [2, 1, <Firewall />, "Windows 防火墙"], [2, 2, <Phone />, "电话和调制解调器"], [2, 3, <Keyboard />, "键盘"], [2, 4, <Access />, "轻松访问中心"], [2, 5, <Calendar />, "日期和时间"],
  [2, 6, <Speaker />, "声音"], [2, 7, <Network />, "网络和共享中心"], [2, 8, <SystemIcon />, "系统"], [2, 9, <Trouble />, "疑难解答"], [2, 10, <AutoPlay />, "自动播放"],
  [3, 1, <Flag />, "操作中心"], [3, 2, <Power />, "电源选项"], [3, 3, <Defaults />, "默认程序"], [3, 4, <Region />, "区域和语言"], [3, 5, <Devices />, "设备管理器"],
  [3, 6, <Mouse />, "鼠标"], [3, 7, <Speech />, "文本到语音转换"], [3, 8, <Display />, "显示"], [3, 9, <Users />, "用户帐户"], [3, 10, <Fonts />, "字体"],
];
const Key = ({ k, tail = "" }: { k: string; tail?: string }) => (
  <SansRun>(<u>{k}</u>){tail}</SansRun>
);

const ControlPanel = () => (
  <Win $x={326} $y={69} $w={800} $h={600} $b={4}>
    <TitleBar>
      <PanelIcon />
      <TitleText>所有控制面板项</TitleText>
      <CaptionButton><MinGlyph /></CaptionButton>
      <CaptionButton><MaxGlyph /></CaptionButton>
      <CaptionButton $gap={2}><CloseGlyph /></CaptionButton>
    </TitleBar>
    <ToolBar>
      <NavButtons />
      <Address>
        <PanelIcon s={17} />
        <Gap $w={6} /><Arrow w={5} />
        <Crumb>控制面板</Crumb><Arrow w={5} />
        <Crumb>所有控制面板项</Crumb><Arrow w={5} />
        <Spacer />
        <Arrow />
        <Gap $w={10} />
        <Refresh />
      </Address>
      <Search>搜索控制面板</Search>
      <SearchButton />
    </ToolBar>
    <PanelBody>
      <PanelHead>
        <Heading>调整计算机的设置</Heading>
        <ViewBy>查看方式: <ViewMode>大图标</ViewMode><Arrow /></ViewBy>
      </PanelHead>
      <ListArea>
        <Items>
          {panelItems.map(([col, row, icon, name]) => (
            <Item key={name} $col={col} $row={row}>{icon}<ItemName><Mixed text={name} bold /></ItemName></Item>
          ))}
        </Items>
        <ScrollBar>
          <ScrollButton><Arrow up /></ScrollButton>
          <Thumb />
          <Spacer />
          <ScrollButton><Arrow /></ScrollButton>
        </ScrollBar>
      </ListArea>
    </PanelBody>
  </Win>
);

const MailDialog = () => (
  <Win $x={154} $y={154} $w={350} $h={398} $b={3}>
    <TitleBar $active>
      <Mail s={16} />
      <TitleText>邮件</TitleText>
      <CaptionButton><CloseGlyph /></CaptionButton>
    </TitleBar>
    <DialogBody>
      <Tab>常规</Tab>
      <Page>
        <Intro><Mail /><IntroText>在此计算机上设置以下配置文件<Key k="O" tail=":" /></IntroText></Intro>
        <ListBox>
          <ListRows><SelectedRow><SansRun>AFU_M.LANDSEA.CN</SansRun></SelectedRow></ListRows>
          <ScrollBar>
            <ScrollButton><Arrow up color={shade} shadow /></ScrollButton>
            <Spacer />
            <ScrollButton><Arrow color={shade} shadow /></ScrollButton>
          </ScrollBar>
        </ListBox>
        <ButtonRow $top={18} $gap={4}>
          <PushButton $w={65} $h={23}>添加<Key k="D" tail="..." /></PushButton>
          <PushButton $w={68} $h={23}>删除<Key k="E" /></PushButton>
          <PushButton $w={71} $h={23} $focus>属性<Key k="R" /></PushButton>
          <PushButton $w={71} $h={23}>复制<Key k="Y" tail="..." /></PushButton>
        </ButtonRow>
        <Caption>启动<SansRun $pad={2}> Microsoft Outlook </SansRun>时使用此配置文件:</Caption>
        <RadioRow $top={6}><Radio on /><span>提示要使用的配置文件<Key k="P" /></span></RadioRow>
        <RadioRow $top={7}><Radio /><span>始终使用此配置文件<Key k="U" /></span></RadioRow>
        <Combo><SansRun>AFU_M.LANDSEA.CN</SansRun><ComboButton><Arrow color={shade} shadow /></ComboButton></Combo>
      </Page>
      <ButtonRow $top={6} $gap={6} $end>
        <PushButton $w={75} $h={21}>确定</PushButton>
        <PushButton $w={75} $h={21}>取消</PushButton>
        <PushButton $w={75} $h={21}>应用<Key k="A" /></PushButton>
      </ButtonRow>
    </DialogBody>
  </Win>
);

export default function App() {
  return (
    <Screen>
      <Global />
      <Defs />
      <HostBarBack>
        <HostBar>
          <HostButton close />
          <HostButton />
          <HostTitle>rdesktop - 192.168.1.188</HostTitle>
        </HostBar>
      </HostBarBack>
      <Desktop>
        <IconGrid>
          {shortcuts.map(([icon, label], i) => (
            <Shortcut key={i}>{icon}<ShortcutLabel><Mixed text={label} /></ShortcutLabel></Shortcut>
          ))}
        </IconGrid>
        <Watermark>
          <MarkLine $h={15} $bold><Mixed text="Windows Server 2008 R2 Enterprise" bold /></MarkLine>
          <MarkLine $h={14}>内部版本<Mixed text=" 7601" /></MarkLine>
          <MarkLine $h={13}>此<Mixed text=" Windows 副本不是正版" /></MarkLine>
        </Watermark>
        <ControlPanel />
        <MailDialog />
      </Desktop>
      <TaskBar>
        <StartButton><WinLogo />开始</StartButton>
        <Rule $l={7} $r={8} $thick />
        <TaskButton $w={48} $open><ServerManager /></TaskButton>
        <TaskButton $w={52}><PowerShell /></TaskButton>
        <TaskButton $w={50}><Explorer /></TaskButton>
        <TaskButton $w={48} $open><PanelIcon s={32} /></TaskButton>
        <Spacer />
        <Rule $l={0} $r={9} $thick />
        <Lang><Mixed text="EN" /></Lang>
        <Rule $l={6} $r={6} />
        <TrayGlyph $w={17} $top={9}><Help /></TrayGlyph>
        <Rule $l={5} $r={4} />
        <TrayGlyph $w={9} $top={8}><LangRestore /></TrayGlyph>
        <Tray>
          <TrayGlyph $w={7} $top={13} $l={6}><Chevrons /></TrayGlyph>
          <TrayGlyph $w={17} $top={10} $l={9}><TrayFlag /></TrayGlyph>
          <TrayGlyph $w={17} $top={10} $l={7}><TrayNet /></TrayGlyph>
          <TrayGlyph $w={17} $top={10} $l={7}><TraySound /></TrayGlyph>
          <Clock><Mixed text="16:30" /><br /><Mixed text="2016/5/19" /></Clock>
          <TrayGlyph $w={16} $top={13} $l={6}><ShowDesktop /></TrayGlyph>
        </Tray>
      </TaskBar>
    </Screen>
  );
}
